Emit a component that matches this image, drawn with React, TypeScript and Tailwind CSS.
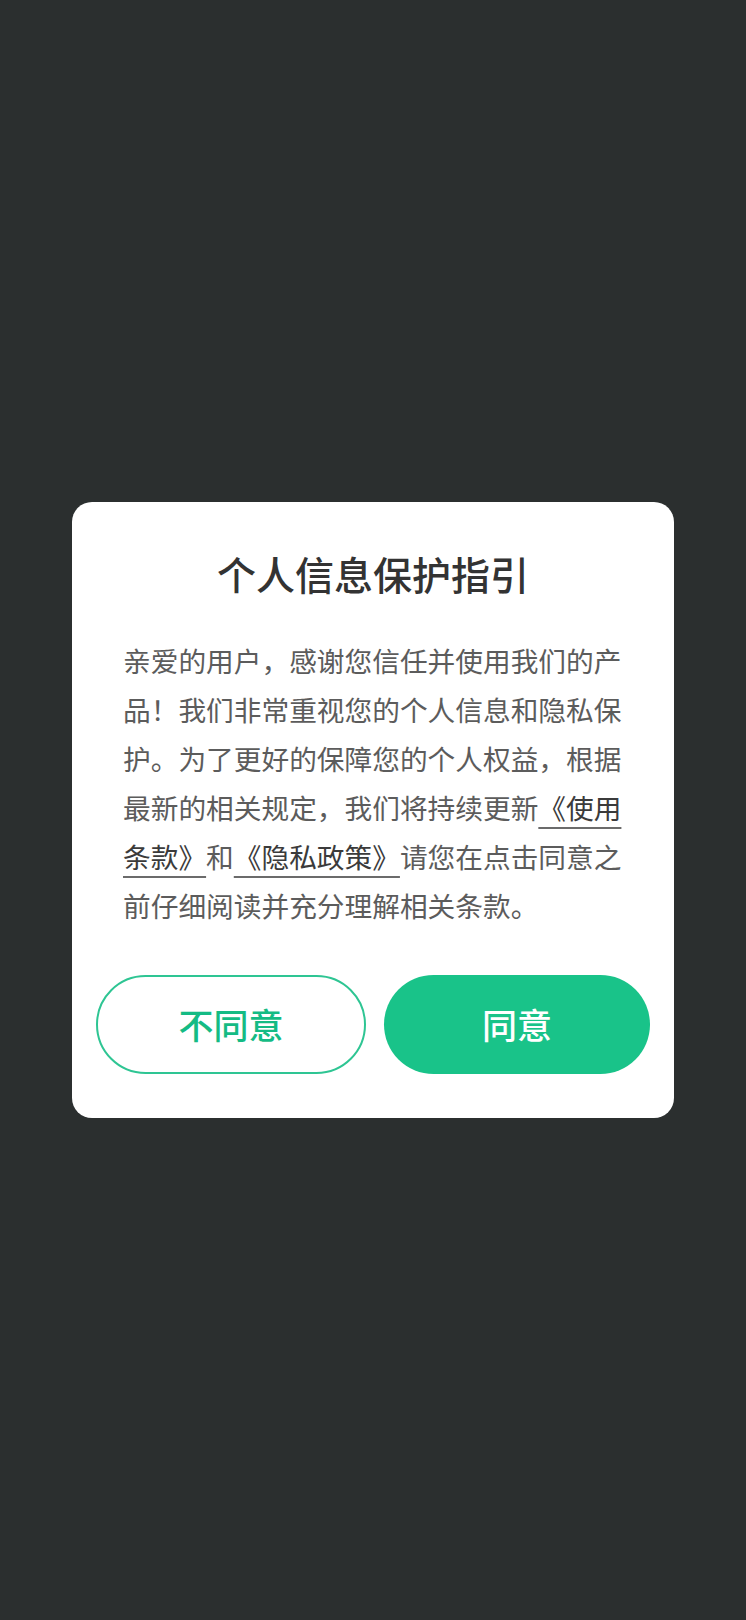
import { useState } from "react";

const cjk = "font-['Noto_Sans_CJK_SC','Noto_Sans',sans-serif]";

function PolicyLink({ children }: { children: string }) {
  return (
    <a
      href="#"
      className="text-[#3b3b3b] underline decoration-[#6b6b6b] decoration-[1.5px] underline-offset-[8px]"
    >
      {children}
    </a>
  );
}

export default function App() {
  const [choice, setChoice] = useState<"agree" | "reject" | null>(null);

  return (
    <div
      className={`${cjk} flex min-h-[1620px] w-full justify-center bg-[#2b2f2f] pt-[502px]`}
      data-choice={choice ?? ""}
    >
      <div className="flex h-fit w-[602px] flex-col rounded-[20px] bg-white pb-[44px] pt-[51px]">
        <h1 className="text-center text-[39px] font-medium leading-[40px] text-[#333333]">
          个人信息保护指引
        </h1>

        <p className="mx-auto mt-[43px] w-[500px] text-[27.7px] leading-[49px] text-[#5c5c5c]">
          亲爱的用户，感谢您信任并使用我们的产品！我们非常重视您的个人信息和隐私保护。为了更好的保障您的个人权益，根据最新的相关规定，我们将持续更新
          <PolicyLink>《使用</PolicyLink>
          <PolicyLink>条款》</PolicyLink>和<PolicyLink>《隐私政策》</PolicyLink>
          请您在点击同意之前仔细阅读并充分理解相关条款。
        </p>

        <div className="mt-[45px] flex gap-[18px] px-[24px]">
          <button
            type="button"
            onClick={() => setChoice("reject")}
            className="flex h-[99px] flex-1 items-center justify-center rounded-full border-2 border-[#2ec593] bg-white text-[35px] font-medium text-[#14bb84]"
          >
            不同意
          </button>
          <button
            type="button"
            onClick={() => setChoice("agree")}
            className="flex h-[99px] flex-1 items-center justify-center rounded-full bg-[#19c389] text-[35px] font-medium text-white"
          >
            同意
          </button>
        </div>
      </div>
    </div>
  );
}
